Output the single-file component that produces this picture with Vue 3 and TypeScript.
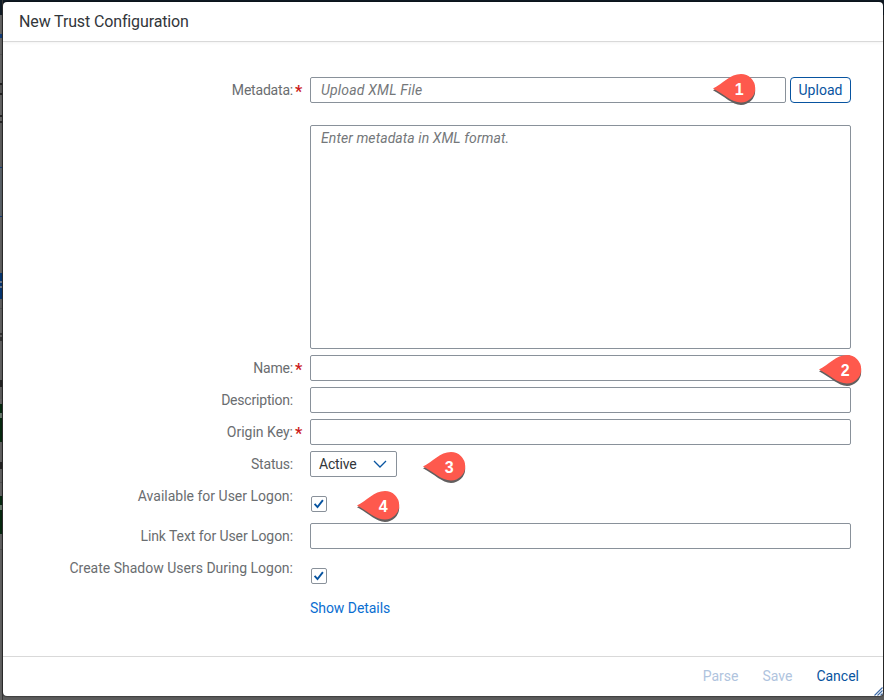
<script setup lang="ts">
import { ref } from 'vue'

interface Strip { h: number; c: string; w?: number }

// Edge of the dimmed page that stays visible beside the dialog
const strips: Strip[] = [
  { h: 15, c: '#111c26' }, { h: 19, c: '#636363' }, { h: 4, c: '#113b77', w: 2 }, { h: 16, c: '#636363' },
  { h: 1, c: '#555555' }, { h: 28, c: '#636363' }, { h: 2, c: '#222222' }, { h: 8, c: '#555555', w: 2 },
  { h: 2, c: '#222222' }, { h: 20, c: '#636363' }, { h: 2, c: '#262626', w: 2 }, { h: 4, c: '#636363' },
  { h: 2, c: '#262626', w: 2 }, { h: 44, c: '#5c5c5c' }, { h: 1, c: '#133b76' }, { h: 48, c: '#596066' },
  { h: 1, c: '#133b76' }, { h: 56, c: '#5f5f5f' }, { h: 8, c: '#05356f' }, { h: 2, c: '#69778b' },
  { h: 3, c: '#05356f' }, { h: 2, c: '#69778b' }, { h: 11, c: '#05356f' }, { h: 9, c: '#5f5f5f' },
  { h: 1, c: '#505050' }, { h: 24, c: '#606060' }, { h: 2, c: '#333333' }, { h: 2, c: '#606060' },
  { h: 4, c: '#333333', w: 2 }, { h: 39, c: '#606060' },
  { h: 7, c: '#222222', w: 2 }, { h: 12, c: '#5b5b5b' }, { h: 5, c: '#606060' }, { h: 9, c: '#06290f' },
  { h: 5, c: '#66776a', w: 2 }, { h: 24, c: '#06290f' }, { h: 20, c: '#606060' }, { h: 7, c: '#222222', w: 2 },
  { h: 13, c: '#606060' }, { h: 1, c: '#505050' }, { h: 13, c: '#606060' }, { h: 9, c: '#06290f' },
  { h: 5, c: '#66776a', w: 2 }, { h: 24, c: '#06290f' }, { h: 15, c: '#606060' }, { h: 1, c: '#505050' },
]

const file = ref('')
const metadata = ref('')
const name = ref('')
const description = ref('')
const originKey = ref('')
const linkText = ref('')
const available = ref(true)
const shadow = ref(true)

const pins = [
  { n: 1, cls: 'pin-1' },
  { n: 2, cls: 'pin-2' },
  { n: 3, cls: 'pin-3' },
  { n: 4, cls: 'pin-4' },
]
</script>

<template>
  <div class="page">
    <div class="behind">
      <div v-for="(s, i) in strips" :key="i" class="strip" :style="{ height: s.h + 'px', width: (s.w ?? 3) + 'px', background: s.c }"></div>
    </div>
    <section class="dialog">
      <header class="head"><h1>New Trust Configuration</h1></header>
      <main class="form">
        <div class="row first">
          <label class="label tight required"><span>Metadata:</span></label>
          <div class="upload">
            <input v-model="file" class="input" placeholder="Upload XML File" />
            <button class="btn-upload">Upload</button>
          </div>
        </div>
        <div class="row area-row">
          <span></span>
          <textarea v-model="metadata" class="input area" placeholder="Enter metadata in XML format."></textarea>
        </div>
        <div class="row">
          <label class="label tight required"><span>Name:</span></label>
          <input v-model="name" class="input" />
        </div>
        <div class="row">
          <label class="label tight"><span>Description:</span></label>
          <input v-model="description" class="input" />
        </div>
        <div class="row">
          <label class="label required"><span>Origin Key:</span></label>
          <input v-model="originKey" class="input" />
        </div>
        <div class="row">
          <label class="label tight"><span>Status:</span></label>
          <div class="select">
            <span>Active</span>
            <svg width="14" height="8" viewBox="0 0 14 8"><path d="M1 1l6 6 6-6" fill="none" stroke="#0854a0" stroke-width="1.3" /></svg>
          </div>
        </div>
        <div class="row tall">
          <label class="label"><span>Available for User Logon:</span></label>
          <div class="check" @click="available = !available">
            <svg v-if="available" width="14" height="14" viewBox="0 0 14 14"><path d="M2.6 6.9l2.9 3.2L10.9 3.2" fill="none" stroke="#0854a0" stroke-width="1.9" /></svg>
          </div>
        </div>
        <div class="row">
          <label class="label link-text"><span>Link Text for User Logon:</span></label>
          <input v-model="linkText" class="input" />
        </div>
        <div class="row tall">
          <label class="label"><span>Create Shadow Users During Logon:</span></label>
          <div class="check" @click="shadow = !shadow">
            <svg v-if="shadow" width="14" height="14" viewBox="0 0 14 14"><path d="M2.6 6.9l2.9 3.2L10.9 3.2" fill="none" stroke="#0854a0" stroke-width="1.9" /></svg>
          </div>
        </div>
        <div class="row">
          <span></span>
          <a class="link">Show Details</a>
        </div>
      </main>
      <footer class="foot">
        <button class="act parse" disabled>Parse</button>
        <button class="act save" disabled>Save</button>
        <button class="act cancel">Cancel</button>
        <svg class="grip" width="9" height="9" viewBox="0 0 9 9"><path d="M.5 8.5l8-8M3.5 8.5l5-5M6.5 8.5l2-2" stroke="#3f6ca8" stroke-width="1.1" /></svg>
      </footer>
    </section>
    <svg v-for="p in pins" :key="p.n" class="pin" :class="p.cls" width="46" height="34" viewBox="0 0 46 34">
      <path d="M0 16.3C10 11.5 17 2.5 28 2.5a14.2 14.2 0 0 1 0 28.4C19 30.9 12 22.5 0 16.3z" fill="#625f5f" />
      <path d="M0 14.6C10 9.6 17 0 28 0a14.2 14.2 0 0 1 0 28.5C18 28.5 11 20.2 0 14.6z" fill="#fe594d" />
      <text x="26.3" y="21" text-anchor="middle">{{ p.n }}</text>
    </svg>
  </div>
</template>

<style>
body { margin: 0; overflow: hidden; }
</style>

<style scoped>
* { box-sizing: border-box; }
.page {
  position: relative;
  width: 884px;
  height: 700px;
  padding: 2px 1px 4px 3px;
  background: linear-gradient(#101b25 15px, #333 15px, #333 690px, #5c5c5c 697px);
  font-family: Roboto, "Liberation Sans", sans-serif;
  font-size: 14px;
  color: #32363a;
}
.behind { position: absolute; left: 0; top: 0; width: 3px; height: 700px; background: #606060; border-right: 1px solid #383838; overflow: hidden; }
.dialog {
  position: relative;
  display: flex;
  flex-direction: column;
  height: 694px;
  background: #fff;
  border-radius: 4px;
  box-shadow: 0 0 2px #000;
  overflow: hidden;
}
.head { height: 40px; border-bottom: 1px solid #d9d9d9; box-shadow: 0 1px 3px #0000000d; padding-left: 16px; flex: none; }
h1 { margin: 0; font-size: 16px; font-weight: 400; line-height: 39px; letter-spacing: -0.13px; }
.form { flex: 1; padding: 32px 32px 0 0; }
.row { display: grid; grid-template-columns: 290px 541px; column-gap: 17px; height: 32px; padding-top: 3px; }
.row.first { height: 48px; }
.row.area-row { height: 230px; }
.row.tall { height: 40px; }
.form .label { position: relative; text-align: right; line-height: 26px; color: #6a6d70; white-space: nowrap; }
.form .tight { letter-spacing: -0.2px; }
.form .link-text { letter-spacing: -0.08px; }
.required::after { content: "*"; position: absolute; left: 292px; top: 2px; color: #cc1c1c; font-size: 16px; font-weight: 700; }
.input {
  width: 100%;
  height: 26px;
  border: 1px solid #89919a;
  border-radius: 2px;
  background: #fff;
  padding: 0 10px;
  margin: 0;
  font: 14px Roboto, sans-serif;
  letter-spacing: 0.08px;
  color: #32363a;
  outline: none;
  resize: none;
  display: block;
}
.input::placeholder { color: #74777a; font-style: italic; opacity: 1; }
.area { height: 224px; padding-top: 3px; line-height: 18px; }
.upload { display: flex; gap: 4px; }
.upload .input { width: 476px; letter-spacing: 0.2px; }
.btn-upload { width: 61px; height: 26px; padding: 0; border: 1px solid #0854a0; border-radius: 4px; background: #fff; color: #0854a0; font: 14px Roboto, sans-serif; letter-spacing: 0.05px; }
.select { width: 87px; height: 26px; border: 1px solid #89919a; border-radius: 2px; padding: 0 9px 0 8px; display: flex; justify-content: space-between; align-items: center; color: #32363a; letter-spacing: -0.2px; }
.check { width: 16px; height: 16px; margin: 13px 0 0 1px; border: 1px solid #89919a; border-radius: 2px; }
.check svg { display: block; }
.link { color: #0a6ed1; line-height: 26px; letter-spacing: -0.05px; }
.foot { position: relative; flex: none; height: 40px; border-top: 1px solid #d9d9d9; display: flex; justify-content: flex-end; align-items: center; gap: 24px; padding: 0 24px 2px 0; }
.act { padding: 0; border: 0; background: none; color: #0854a0; font: 14px Roboto, sans-serif; }
.act:disabled { color: #b0c4de; }
.grip { position: absolute; right: 0; bottom: 0; }
.pin { position: absolute; overflow: visible; }
.pin text { font: 700 16px "Liberation Sans", sans-serif; fill: #fff; }
.pin-1 { left: 713px; top: 74px; }
.pin-2 { left: 819px; top: 355px; }
.pin-3 { left: 423px; top: 452px; }
.pin-4 { left: 357px; top: 491px; }
</style>
